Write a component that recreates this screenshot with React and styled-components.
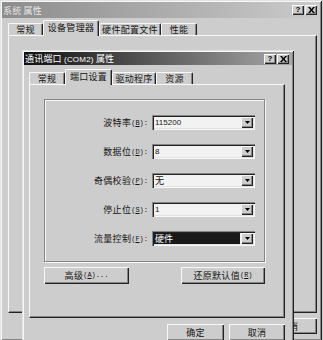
import React from "react";
import styled, { createGlobalStyle } from "styled-components";

const C = {
  face: "#cdcdcd",
  light: "#f8f8f8",
  hi: "#e2e2e2",
  shadow: "#858585",
  dark: "#222222",
  field: "#f2f2f2",
};

const GlobalStyle = createGlobalStyle`
  html, body { margin: 0; padding: 0; background: ${C.face}; }
  body {
    font-family: "Noto Sans CJK SC", "Liberation Sans", sans-serif;
    font-size: 9px;
    color: #151515;
  }
  #root { width: 323px; height: 340px; overflow: hidden; }
`;

const Desktop = styled.div`
  position: relative;
  width: 323px;
  height: 340px;
  overflow: hidden;
  background: ${C.face};
`;

const Window = styled.div`
  position: ${(p) => (p.$floating ? "absolute" : "relative")};
  left: ${(p) => p.$x}px;
  top: ${(p) => p.$y}px;
  width: ${(p) => p.$w}px;
  height: ${(p) => p.$h}px;
  box-sizing: border-box;
  padding: 2px;
  background: ${C.face};
  box-shadow: inset 1px 1px ${C.hi}, inset -1px -1px ${C.dark},
    inset 2px 2px ${C.light}, inset -2px -2px ${C.shadow};
  display: flex;
  flex-direction: column;
`;

const TitleBar = styled.div`
  flex: none;
  height: ${(p) => p.$h}px;
  display: flex;
  align-items: center;
  padding: 0 3px 0 1px;
  background: linear-gradient(to right, ${(p) => p.$from}, ${(p) => p.$to});
  color: ${(p) => p.$text};
`;

const TitleText = styled.span`
  flex: 1;
  white-space: nowrap;
  line-height: 1;
  letter-spacing: 0.2px;
`;

const Latin = styled.span`
  font-family: "Liberation Sans", sans-serif;
  font-size: 8px;
`;

const CaptionButtons = styled.div`
  display: flex;
  gap: 1px;
`;

const CaptionButton = styled.div`
  width: 12px;
  height: 10px;
  box-sizing: border-box;
  background: ${C.face};
  box-shadow: inset 1px 1px ${C.light}, inset -1px -1px ${C.dark},
    inset -2px -2px ${C.shadow};
  display: flex;
  align-items: center;
  justify-content: center;
  font: bold 8px "Liberation Sans", sans-serif;
  color: #000;
  line-height: 1;
`;

const Body = styled.div`
  flex: 1;
  display: flex;
  flex-direction: column;
  padding: ${(p) => p.$pad};
`;

const TabStrip = styled.div`
  display: flex;
  align-items: flex-end;
  height: ${(p) => p.$h}px;
  position: relative;
  z-index: 1;
`;

const Tab = styled.div`
  width: ${(p) => p.$w}px;
  height: ${(p) => (p.$active ? p.$h + 4 : p.$h)}px;
  margin-bottom: ${(p) => (p.$active ? -1 : 0)}px;
  box-sizing: border-box;
  background: ${C.face};
  border-top: 1px solid ${C.light};
  border-left: 1px solid ${C.light};
  border-right: 1px solid ${C.dark};
  border-top-left-radius: 2px;
  border-top-right-radius: 2px;
  box-shadow: inset -1px 0 ${C.shadow};
  display: flex;
  align-items: center;
  justify-content: center;
  padding-bottom: ${(p) => (p.$active ? 3 : 0)}px;
  white-space: nowrap;
  line-height: 1;
  letter-spacing: 0.3px;
`;

const Panel = styled.div`
  height: ${(p) => p.$h}px;
  box-sizing: border-box;
  margin: ${(p) => p.$margin};
  background: ${C.face};
  border-top: 1px solid ${C.light};
  border-left: 1px solid ${C.light};
  border-right: 1px solid ${C.dark};
  border-bottom: 1px solid ${C.dark};
  box-shadow: inset -1px -1px ${C.shadow};
  padding: ${(p) => p.$pad || 0};
  display: flex;
  flex-direction: column;
`;

const ButtonRow = styled.div`
  display: flex;
  justify-content: ${(p) => p.$justify || "flex-end"};
  gap: ${(p) => p.$gap || 0}px;
  margin: ${(p) => p.$margin};
`;

const Button = styled.div`
  width: ${(p) => p.$w}px;
  height: ${(p) => p.$h || 17}px;
  box-sizing: border-box;
  background: ${C.face};
  box-shadow: inset 1px 1px ${C.light}, inset -1px -1px ${C.dark},
    inset -2px -2px ${C.shadow};
  display: flex;
  align-items: center;
  justify-content: center;
  white-space: nowrap;
  line-height: 1;
  letter-spacing: 0.3px;
`;

const Mnemonic = styled.span`
  font-family: "Liberation Mono", monospace;
  font-size: 7px;
  letter-spacing: 0;
  u { text-decoration: underline; }
`;

const Group = styled.div`
  height: 163px;
  box-sizing: border-box;
  border: 1px solid ${C.shadow};
  box-shadow: inset 1px 1px ${C.light}, 1px 1px ${C.light};
  padding: 15px 0 0 0;
  display: grid;
  grid-template-columns: 103px 103px;
  grid-auto-rows: 15px;
  column-gap: 4px;
  row-gap: 14px;
`;

const Label = styled.div`
  display: flex;
  align-items: center;
  justify-content: flex-end;
  white-space: nowrap;
  letter-spacing: 0.3px;
`;

const Combo = styled.div`
  box-sizing: border-box;
  display: flex;
  align-items: center;
  gap: 1px;
  padding: 2px;
  background: ${C.field};
  box-shadow: inset 1px 1px ${C.shadow}, inset 2px 2px ${C.dark},
    inset -1px -1px ${C.light}, inset -2px -2px ${C.hi};
`;

const ComboValue = styled.div`
  flex: 1;
  height: 100%;
  display: flex;
  align-items: center;
  padding-left: 1px;
  background: ${(p) => (p.$selected ? "#181818" : "transparent")};
  color: ${(p) => (p.$selected ? "#ffffff" : "#151515")};
  white-space: nowrap;
`;

const DropButton = styled.div`
  width: 12px;
  height: 11px;
  box-sizing: border-box;
  background: ${C.face};
  box-shadow: inset 1px 1px ${C.light}, inset -1px -1px ${C.dark},
    inset -2px -2px ${C.shadow};
  display: flex;
  align-items: center;
  justify-content: center;
`;

const CloseGlyph = () => (
  <svg width="7" height="6" viewBox="0 0 7 6">
    <path d="M0 0h2l1.5 2L5 0h2L4.5 3 7 6H5L3.5 4 2 6H0l2.5-3z" fill="#000" />
  </svg>
);

const Arrow = () => (
  <svg width="5" height="3" viewBox="0 0 5 3">
    <path d="M0 0h5L2.5 3z" fill="#000" />
  </svg>
);

const Caption = ({ children, h, from, to, text }) => (
  <TitleBar $h={h} $from={from} $to={to} $text={text}>
    <TitleText>{children}</TitleText>
    <CaptionButtons>
      <CaptionButton>?</CaptionButton>
      <CaptionButton>
        <CloseGlyph />
      </CaptionButton>
    </CaptionButtons>
  </TitleBar>
);

const Key = ({ name, k }) => (
  <>
    {name}
    <Mnemonic>
      {" ("}
      <u>{k}</u>
      {"):"}
    </Mnemonic>
  </>
);

const settings = [
  { name: "波特率", k: "B", value: <Latin>115200</Latin> },
  { name: "数据位", k: "D", value: <Latin>8</Latin> },
  { name: "奇偶校验", k: "P", value: "无" },
  { name: "停止位", k: "S", value: <Latin>1</Latin> },
  { name: "流量控制", k: "F", value: "硬件", selected: true },
];

export default function App() {
  return (
    <Desktop>
      <GlobalStyle />
      <Window $w={322} $h={341}>
        <Caption h={16} from="#8c8c8c" to="#cbcbcb" text="#e6e6e6">
          系统 属性
        </Caption>
        <Body $pad="2px 3px 0 6px">
          <TabStrip $h={15}>
            <Tab $w={35} $h={12}>常规</Tab>
            <Tab $w={56} $h={12} $active>设备管理器</Tab>
            <Tab $w={62} $h={12}>硬件配置文件</Tab>
            <Tab $w={36} $h={12}>性能</Tab>
          </TabStrip>
          <Panel $h={278} $margin="0" />
          <ButtonRow $gap={5} $margin="5px 0 0 0">
            <Button $w={56} $h={16}>确定</Button>
            <Button $w={56} $h={16}>取消</Button>
          </ButtonRow>
        </Body>
      </Window>

      <Window $floating $x={22} $y={50} $w={272} $h={300}>
        <Caption h={13} from="#101010" to="#a8a8a8" text="#ffffff">
          通讯端口 <Latin>(COM2)</Latin> 属性
        </Caption>
        <Body $pad="4px 5px 0 5px">
          <TabStrip $h={15}>
            <Tab $w={36} $h={12}>常规</Tab>
            <Tab $w={47} $h={12} $active>端口设置</Tab>
            <Tab $w={44} $h={12}>驱动程序</Tab>
            <Tab $w={37} $h={12}>资源</Tab>
          </TabStrip>
          <Panel $h={234} $margin="0 2px 0 0" $pad="14px 19px 0 14px">
            <Group>
              {settings.map((s) => (
                <React.Fragment key={s.k}>
                  <Label>
                    <Key name={s.name} k={s.k} />
                  </Label>
                  <Combo>
                    <ComboValue $selected={s.selected}>{s.value}</ComboValue>
                    <DropButton>
                      <Arrow />
                    </DropButton>
                  </Combo>
                </React.Fragment>
              ))}
            </Group>
            <ButtonRow $justify="space-between" $margin="5px 0 0 0">
              <Button $w={85}>
                高级<Mnemonic>{" ("}<u>A</u>{")..."}</Mnemonic>
              </Button>
              <Button $w={84}>
                还原默认值<Mnemonic>{"("}<u>R</u>{")"}</Mnemonic>
              </Button>
            </ButtonRow>
          </Panel>
          <ButtonRow $gap={5} $margin="6px 2px 0 0">
            <Button $w={57}>确定</Button>
            <Button $w={56}>取消</Button>
          </ButtonRow>
        </Body>
      </Window>
    </Desktop>
  );
}
